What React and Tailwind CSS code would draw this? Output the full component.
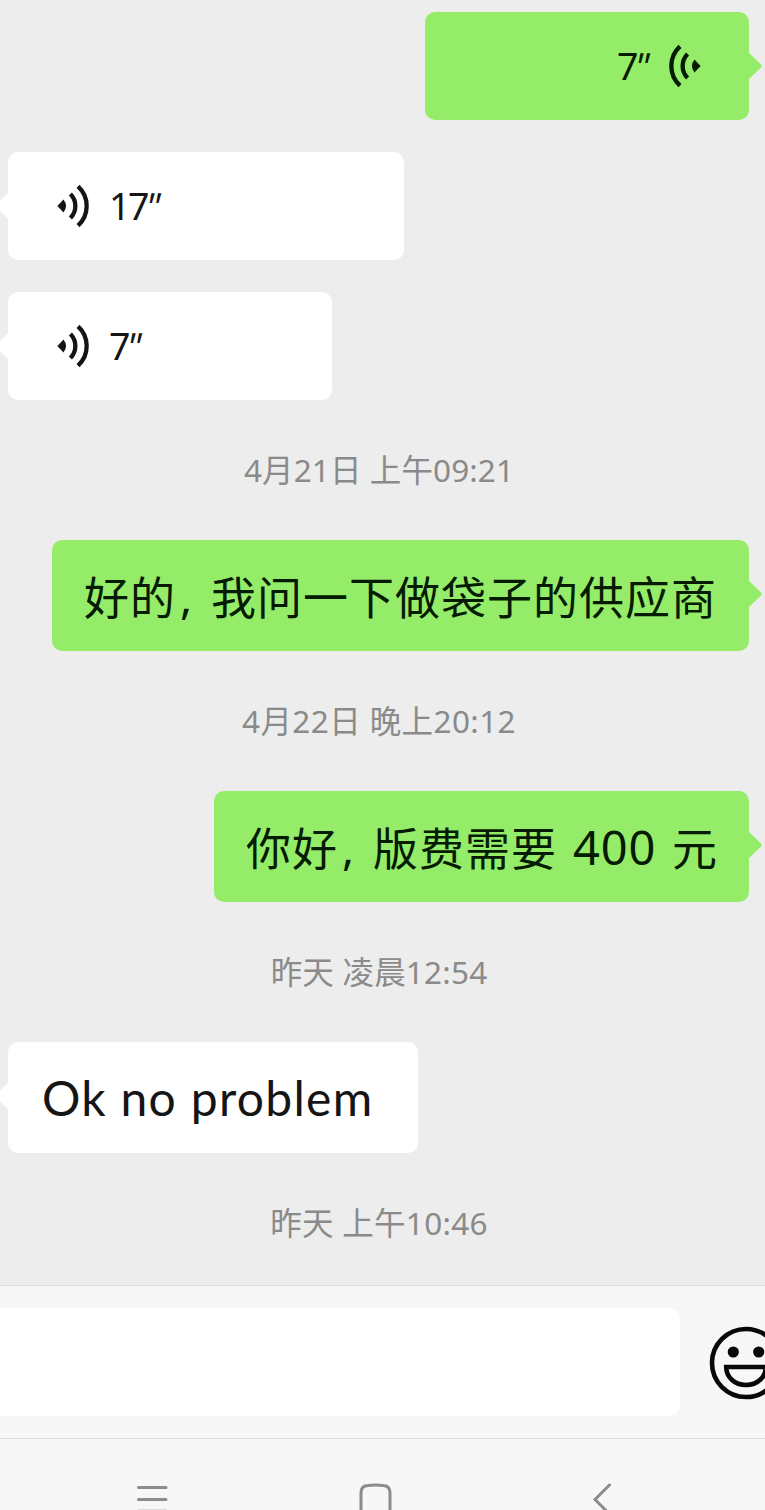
import React from 'react'

const MESSAGES = [
  { id: 1, type: 'voice', mine: true, seconds: 7, size: 'w-[324px]' },
  { id: 2, type: 'voice', mine: false, seconds: 17, size: 'w-[396px] mt-8' },
  { id: 3, type: 'voice', mine: false, seconds: 7, size: 'w-[324px] mt-8' },
  { id: 4, type: 'time', text: '4月21日 上午09:21', spacing: 'tracking-[0.1px]' },
  { id: 5, type: 'text', mine: true, parts: ['好的', ',', '我问一下做袋子的供应商'], size: 'w-[697px]' },
  { id: 6, type: 'time', text: '4月22日 晚上20:12', spacing: 'tracking-[0.4px]' },
  { id: 7, type: 'text', mine: true, parts: ['你好', ',', '版费需要', '400', '元'], size: 'w-[535px]' },
  { id: 8, type: 'time', text: '昨天 凌晨12:54', spacing: 'tracking-[0.2px]' },
  { id: 9, type: 'text', mine: false, parts: ['Ok no problem'], size: 'w-[410px]' },
  { id: 10, type: 'time', text: '昨天 上午10:46', spacing: 'tracking-[0.3px]' }
]

function VoiceIcon({ flip }) {
  return (
    <svg viewBox="0 0 32 44" className={`w-8 h-11 shrink-0 ${flip ? '-scale-x-100' : ''}`} fill="none" stroke="currentColor" strokeWidth="4.3">
      <path d="M11 2.400A26.500 26.500 0 0 0 11 41.600" />
      <path d="M18.600 10A17 17 0 0 0 18.600 34" />
      <path d="M25.500 15.500L31.600 22L25.500 28.500Q20.400 22 25.500 15.500Z" fill="currentColor" stroke="none" />
    </svg>
  )
}

function Tail({ mine }) {
  return (
    <svg
      viewBox="0 0 14 28"
      className={`absolute top-10 w-[14px] h-7 ${mine ? '-right-[13px] text-[#95ec69]' : '-left-[13px] -scale-x-100 text-white'}`}
    >
      <path d="M0 0L13 12.600Q14.400 14 13 15.400L0 28Z" fill="currentColor" />
    </svg>
  )
}

function Bubble({ mine, size, className, children }) {
  return (
    <div className={`relative flex items-center rounded-[10px] ${mine ? 'self-end mr-4 bg-[#95ec69] text-[#051b02]' : 'ml-2 bg-white text-[#151515]'} ${size} ${className}`}>
      <Tail mine={mine} />
      {children}
    </div>
  )
}

function VoiceMessage({ mine, seconds, size }) {
  return (
    <Bubble mine={mine} size={size} className={`h-[108px] ${mine ? 'flex-row-reverse pr-12 gap-4' : 'pl-[49px] gap-5'}`}>
      <VoiceIcon flip={!mine} />
      <span className="flex pb-px text-[37.5px] leading-none tracking-[-2.5px]">
        {seconds}
        <span className="ml-[2px] w-[15px] skew-x-[18deg]">″</span>
      </span>
    </Bubble>
  )
}

function partClass(p) {
  if (p === ',') return 'w-[35px] pl-[4px] pt-[2px]'
  if (/^\d+$/.test(p)) return 'ml-[16px] mr-[17px] w-[82px] pt-[2px] text-[47px] tracking-[0.8px]'
  if (/^[A-Za-z ]+$/.test(p)) return "pl-[2px] font-['Lato'] text-[48px] tracking-[1.3px]"
  return 'pt-[4px]'
}

function TextMessage({ mine, parts, size }) {
  return (
    <Bubble mine={mine} size={size} className="h-[111px] px-8 text-[45px] leading-none tracking-[1px] whitespace-nowrap *:shrink-0">
      {parts.map((p, i) => (
        <span key={i} className={partClass(p)}>{p}</span>
      ))}
    </Bubble>
  )
}

function Timestamp({ text, spacing }) {
  return (
    <div className={`h-[140px] flex items-center justify-center pr-[7px] text-[31.5px] leading-none text-[#8a8a8a] ${spacing}`}>
      {text}
    </div>
  )
}

function InputBar() {
  return (
    <div className="h-[154px] shrink-0 flex items-center border-y border-[#dedede] bg-[#f7f7f7]">
      <div className="w-[680px] h-[108px] shrink-0 rounded-r-[10px] bg-white" />
      <svg viewBox="0 0 74 74" className="mt-[2px] ml-[29px] w-[74px] h-[74px] shrink-0" fill="none" stroke="#080808" strokeWidth="4.6">
        <circle cx="37" cy="37" r="34" />
        <circle cx="24.3" cy="26" r="5.6" fill="#080808" stroke="none" />
        <circle cx="49.7" cy="26" r="5.6" fill="#080808" stroke="none" />
        <path d="M17.200 41H56.800C56.800 51 48.500 59 37 59S17.200 51 17.200 41Z" />
      </svg>
    </div>
  )
}

function NavBar() {
  return (
    <div className="flex-1 overflow-hidden">
      <svg viewBox="0 0 765 71" className="w-[765px] h-[71px]" fill="none" stroke="#8c8c8c" strokeWidth="3" strokeLinecap="round">
        <path d="M138.500 48.500H166M138.500 60.500H166M138.500 72.300H166" />
        <path d="M361 80V54Q361 46.500 368 46.500Q375.500 45.500 383 46.500Q390 46.500 390 54V80" />
        <path d="M609.500 46L595 60.500L609.500 75" />
      </svg>
    </div>
  )
}

function App() {
  return (
    <div className="w-[765px] h-[1510px] flex flex-col overflow-hidden bg-[#f7f7f7] font-['Noto_Sans','Noto_Sans_CJK_SC',sans-serif]">
      <main className="h-[1285px] shrink-0 flex flex-col pt-3 overflow-hidden bg-[#ededed] *:shrink-0">
        {MESSAGES.map(m => {
          if (m.type === 'voice') return <VoiceMessage key={m.id} {...m} />
          if (m.type === 'text') return <TextMessage key={m.id} {...m} />
          return <Timestamp key={m.id} {...m} />
        })}
      </main>
      <InputBar />
      <NavBar />
    </div>
  )
}

export default App
